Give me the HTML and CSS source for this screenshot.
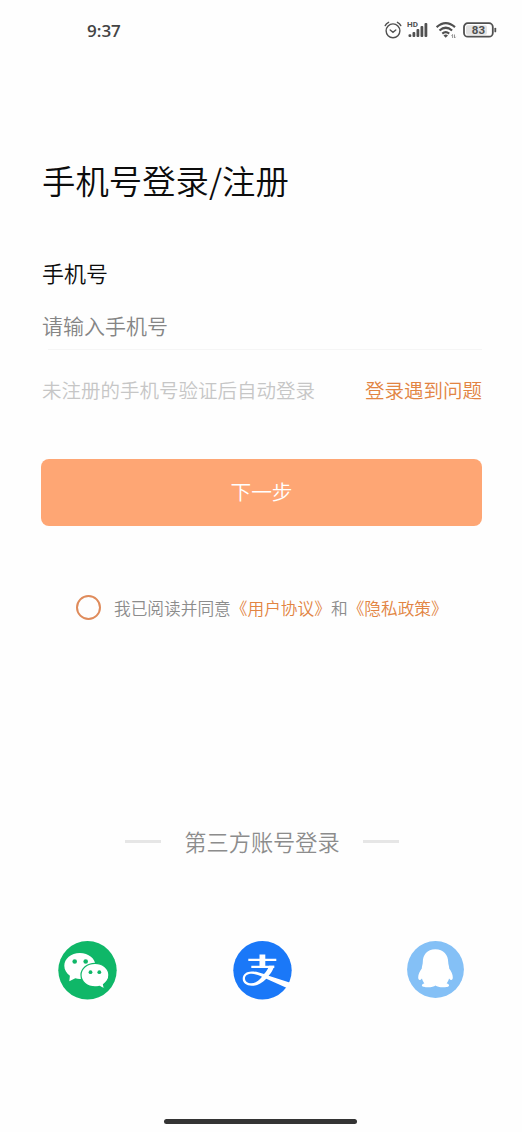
FILE: index.html
```
<!DOCTYPE html>
<html lang="zh-CN">
<head>
<meta charset="utf-8">
<title>手机号登录/注册</title>
<link rel="stylesheet" href="styles.css">
</head>
<body>
<div class="screen">
  <header class="status">
    <span class="time">9:37</span>
    <div class="indicators">
      <svg class="alarm" width="18" height="18" viewBox="0 0 18 18" fill="none" stroke="#505050" stroke-width="1.4" stroke-linecap="round">
        <circle cx="9" cy="9.8" r="6.9"/>
        <path d="M1.2 4.6Q2.2 2.3 4.6 1.3M16.8 4.6Q15.8 2.3 13.4 1.3M6.2 9L9 11.3L11.8 9"/>
      </svg>
      <svg class="signal" width="22" height="20" viewBox="0 0 22 20">
        <text class="hd" x="0" y="7.2">HD</text>
        <g fill="#505050"><rect x="1.5" y="14.2" width="2.8" height="2.8" rx="1"/><rect x="5.5" y="12" width="2.8" height="5" rx="1"/><rect x="9.5" y="9" width="2.8" height="8" rx="1"/><rect x="13.5" y="6" width="2.8" height="11" rx="1"/><rect x="17.5" y="3" width="2.8" height="14" rx="1"/></g>
      </svg>
      <svg class="wifi" width="21" height="18" viewBox="0 0 21 18" fill="none" stroke="#505050">
        <path d="M.6 6.2Q9.7-1.9 19 6.2" stroke-width="2.2"/>
        <path d="M3.5 9.5Q9.7 4 16.1 9.5" stroke-width="2.2"/>
        <path d="M6.3 12.6Q9.7 9.8 13.2 12.6" stroke-width="2.2"/>
        <path d="M7.5 14.4Q9.7 12.7 12 14.4L9.7 16.7Z" fill="#505050" stroke="none"/>
        <path d="M16.6 17v-3.5l-1.2 1.2M18.5 13.5V17l1.2-1.2" stroke="#888" stroke-width=".9"/>
      </svg>
      <svg class="battery" width="34" height="16" viewBox="0 0 34 16">
        <rect x="1" y="1.2" width="28.8" height="13.5" rx="3.8" fill="#fff" stroke="#505050" stroke-width="1.8"/>
        <rect x="3" y="3.2" width="21" height="9.5" rx="1.8" fill="#e2e2e2"/>
        <rect x="31.4" y="5.7" width="1.8" height="4.6" rx=".9" fill="#505050"/>
        <text class="level" x="15.4" y="12" text-anchor="middle">83</text>
      </svg>
    </div>
  </header>

  <main class="login">
    <h1 class="title">手机号登录/注册</h1>
    <label class="label" for="phone">手机号</label>
    <input class="phone" id="phone" type="tel" placeholder="请输入手机号">
    <div class="help">
      <span class="hint">未注册的手机号验证后自动登录</span>
      <a class="link">登录遇到问题</a>
    </div>
    <button class="next" type="button">下一步</button>
    <div class="agreement">
      <span class="radio"></span>
      <span>我已阅读并同意<a class="link">《用户协议》</a>和<a class="link">《隐私政策》</a></span>
    </div>
  </main>

  <section class="third">
    <div class="divider"><span class="dash"></span><span>第三方账号登录</span><span class="dash"></span></div>
    <div class="providers">
      <svg width="59" height="59" viewBox="0 0 59 59">
        <circle cx="29.5" cy="29.3" r="29.2" fill="#0fb768"/>
        <path d="M21.8 12C13 12 6.3 17.7 6.3 24.8c0 4 2.2 7.5 5.6 9.9l-.6 5.5 6-3c1.5.4 3 .7 4.5.7 8.8 0 15.7-5.8 15.7-13.1S30.6 12 21.8 12Z" fill="#fff"/>
        <path d="M37 22.3c-7.9 0-14 5.2-14 11.8s6.1 11.8 14 11.8c1.6 0 3.1-.2 4.5-.6l4.900 2.700-.9-4.600c3.300-2.200 5.400-5.500 5.400-9.300 0-6.600-6.100-11.800-13.900-11.800Z" fill="#fff" stroke="#0fb768" stroke-width="1.200"/>
        <g fill="#0fb768"><circle cx="16.700" cy="20.500" r="2.300"/><circle cx="27.700" cy="20.500" r="2.300"/><circle cx="32.500" cy="31.200" r="1.900"/><circle cx="41.300" cy="31.200" r="1.900"/></g>
      </svg>
      <svg width="59" height="59" viewBox="0 0 59 59">
        <circle cx="29.500" cy="29.300" r="29.200" fill="#1a78f8"/>
        <path d="M26.500 13.500h5.800v4.200h11v2.300h-11v4.700h9v2.200H18.300v-2.200h8.200V20H15.300v-2.300h11.200Z" fill="#fff"/>
        <path d="M36 24.700h5.300C40 29 38 32.200 35.600 34.700L57.300 41.800 54.500 47.300 33.300 37.700C28.500 42.500 24 44.800 18.800 44.800 13.200 44.800 9.700 41.900 9.700 37.800c0-4.500 3.900-7.300 9-7.300 4 0 8 1.200 12.300 2.600 2.300-2.500 4-5 5-8.400ZM29 35.800c-3.700-1.800-7-3-10.200-3-4 0-6.800 1.700-6.800 4.600 0 2.900 2.500 4.900 6.400 4.900 3.900 0 7.200-2.500 10.600-6.500Z" fill="#fff"/>
      </svg>
      <svg width="57" height="57" viewBox="0 0 57 57">
        <circle cx="28.500" cy="28.500" r="28.400" fill="#84c0f6"/>
        <path d="M28.300 8.200C20 8.200 15.800 14 15.800 21c0 2.800-1 4-1 6.600-2.200 3-3.600 6-3.600 9 0 1.600.6 2.400 1.500 2.400.8 0 1.600-.7 2.300-1.500.5 2 1.200 3.400 2.400 4.700-1.600.7-2.500 1.400-2.500 2.200 0 1.400 3 1.800 6.300 1.800 3.300 0 5.800-.7 7.300-1.800 1.500 1.100 4 1.800 7.300 1.800s6.300-.4 6.300-1.800c0-.8-.9-1.500-2.500-2.200 1.200-1.300 1.900-2.700 2.400-4.700.7.800 1.500 1.500 2.300 1.500.9 0 1.500-.8 1.500-2.400 0-3-1.400-6-3.600-9 0-2.600-1-3.800-1-6.600 0-7-4.600-12.800-12.900-12.800Z" fill="#fff"/>
      </svg>
    </div>
  </section>
  <div class="home"></div>
</div>
</body>
</html>
```
FILE: styles.css
```
* { box-sizing: border-box; }
body {
  margin: 0;
  background: #fefefe;
  font-family: "Noto Sans CJK SC DemiLight", "Noto Sans CJK SC", sans-serif;
  font-weight: 350;
  color: #0c0c0c;
}
.screen {
  width: 522px;
  height: 1132px;
  display: flex;
  flex-direction: column;
  overflow: hidden;
}
.status {
  height: 60px;
  padding: 0 25px 0 87px;
  display: flex;
  align-items: center;
  justify-content: space-between;
}
.time {
  padding-top: 1px;
  font: 600 17px/24px "Open Sans", sans-serif;
  color: #444;
}
.indicators { display: flex; align-items: center; }
.signal { margin-left: 5px; }
.wifi { margin-left: 7px; }
.battery { margin-left: 6px; }
.hd { font: 700 8px Roboto, sans-serif; fill: #505050; }
.level { font: 700 11.5px Roboto, sans-serif; fill: #505050; }
.login {
  display: flex;
  flex-direction: column;
  padding: 96px 40px 0 41px;
}
.title {
  margin: 0 0 52px 1px;
  font-size: 33.4px;
  line-height: 48px;
  font-weight: inherit;
}
.label { font-size: 22px; line-height: 32px; margin-left: 1px; }
.phone {
  margin: 13px 0 0 1px;
  height: 49px;
  padding: 0 0 1px;
  border: 0;
  background: linear-gradient(#f5f5f5, #f5f5f5) 6px 100% / 434px 1px no-repeat;
  outline: 0;
  font: inherit;
  font-size: 21px;
  line-height: 32px;
}
.phone::placeholder { color: #858585; opacity: 1; }
.help {
  display: flex;
  justify-content: space-between;
  margin-top: 25px;
  padding-left: 1px;
  font-size: 19.5px;
  line-height: 30px;
}
.hint { color: #c6c6c6; }
.link { color: #e28442; }
.next {
  margin-top: 54px;
  height: 67px;
  padding: 0 0 3px;
  border: 0;
  border-radius: 8px;
  background: #fea674;
  color: #fff;
  font: inherit;
  font-size: 20.7px;
  line-height: 30px;
}
.agreement {
  display: flex;
  align-items: center;
  gap: 13px;
  margin: 66px 0 0 35px;
  font-size: 16.7px;
  line-height: 32px;
  color: #8c8c8c;
  white-space: nowrap;
}
.radio {
  width: 25px;
  height: 25px;
  margin-bottom: 1px;
  border: 2px solid #df8b5b;
  border-radius: 50%;
}
.third { margin-top: 201px; }
.divider {
  display: flex;
  align-items: center;
  justify-content: center;
  gap: 23px;
  padding-left: 2px;
  font-size: 22.2px;
  line-height: 32px;
  color: #8c8c8c;
}
.dash { width: 36px; height: 3px; background: #e6e6e6; }
.providers {
  display: flex;
  justify-content: space-between;
  margin-top: 84px;
  padding: 0 58px;
}
.home {
  width: 193px;
  height: 5px;
  margin: auto auto 8px 164px;
  border-radius: 3px;
  background: #343434;
}
```
